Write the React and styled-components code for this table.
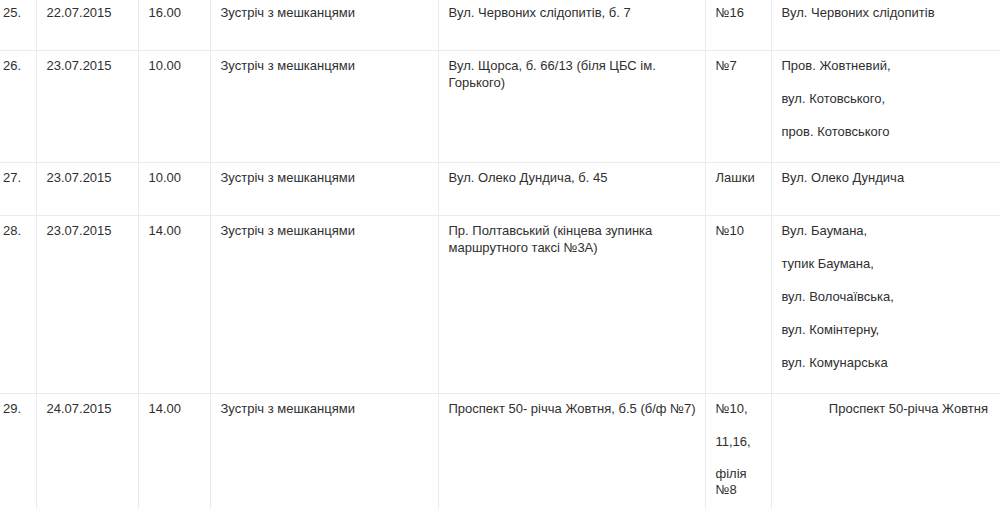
import React from 'react';
import styled, { createGlobalStyle } from 'styled-components';

const GlobalStyles = createGlobalStyle`
  html, body {
    margin: 0;
    padding: 0;
    background: #fff;
    overflow: hidden;
  }
  body {
    font-family: 'Liberation Sans', Arial, sans-serif;
    font-size: 13px;
    color: #2f2f2f;
  }
`;

const Table = styled.table`
  width: 1000px;
  margin-top: -3px;
  border-collapse: collapse;
  table-layout: fixed;
`;

const Row = styled.tr`
  height: 53px;
  border-top: 1px solid #ebebeb;
  border-bottom: 1px solid #ebebeb;
`;

const Cell = styled.td`
  vertical-align: top;
  padding: 6px ${p => (p.$align === 'right' ? '12px' : '10px')} 6px ${p => (p.$first ? '3px' : '10px')};
  border-left: ${p => (p.$first ? 'none' : '1px solid #ebebeb')};
  text-align: ${p => p.$align || 'left'};
  line-height: 17px;
  white-space: ${p => (p.$nowrap ? 'nowrap' : 'normal')};
`;

const Para = styled.p`
  margin: 0 0 16px;
  line-height: ${p => (p.$tight ? '16px' : '17px')};
`;

const widths = [36, 102, 72, 228, 267, 66, 229];

const rows = [
  {
    n: '25.', date: '22.07.2015', time: '16.00',
    place: ['Вул. Червоних слідопитів, б. 7'],
    zone: [['№16']],
    streets: ['Вул. Червоних слідопитів'],
  },
  {
    n: '26.', date: '23.07.2015', time: '10.00',
    place: ['Вул. Щорса, б. 66/13 (біля ЦБС ім.', 'Горького)'],
    zone: [['№7']],
    streets: ['Пров. Жовтневий,', 'вул. Котовського,', 'пров. Котовського'],
  },
  {
    n: '27.', date: '23.07.2015', time: '10.00',
    place: ['Вул. Олеко Дундича, б. 45'],
    zone: [['Лашки']],
    streets: ['Вул. Олеко Дундича'],
  },
  {
    n: '28.', date: '23.07.2015', time: '14.00',
    place: ['Пр. Полтавський (кінцева зупинка', 'маршрутного таксі №3А)'],
    zone: [['№10']],
    streets: ['Вул. Баумана,', 'тупик Баумана,', 'вул. Волочаївська,', 'вул. Комінтерну,', 'вул. Комунарська'],
  },
  {
    n: '29.', date: '24.07.2015', time: '14.00',
    place: ['Проспект 50- річча Жовтня, б.5 (б/ф №7)'],
    zone: [['№10,'], ['11,16,'], ['філія', '№8']],
    streets: ['Проспект 50-річча Жовтня'],
    right: true,
  },
];

function Lines({ items }) {
  return items.map((t, i) => (
    <React.Fragment key={i}>
      {i > 0 && <br />}
      {t}
    </React.Fragment>
  ));
}

export default function App() {
  return (
    <>
      <GlobalStyles />
      <Table>
        <colgroup>
          {widths.map((w, i) => <col key={i} style={{ width: w }} />)}
        </colgroup>
        <tbody>
          {rows.map(r => (
            <Row key={r.n}>
              <Cell $first>{r.n}</Cell>
              <Cell>{r.date}</Cell>
              <Cell>{r.time}</Cell>
              <Cell>Зустріч з мешканцями</Cell>
              <Cell $nowrap><Lines items={r.place} /></Cell>
              <Cell>
                {r.zone.map((z, i) => (
                  <Para key={i} $tight={z.length > 1}><Lines items={z} /></Para>
                ))}
              </Cell>
              <Cell $align={r.right ? 'right' : 'left'}>
                {r.streets.map((s, i) => <Para key={i}>{s}</Para>)}
              </Cell>
            </Row>
          ))}
        </tbody>
      </Table>
    </>
  );
}
